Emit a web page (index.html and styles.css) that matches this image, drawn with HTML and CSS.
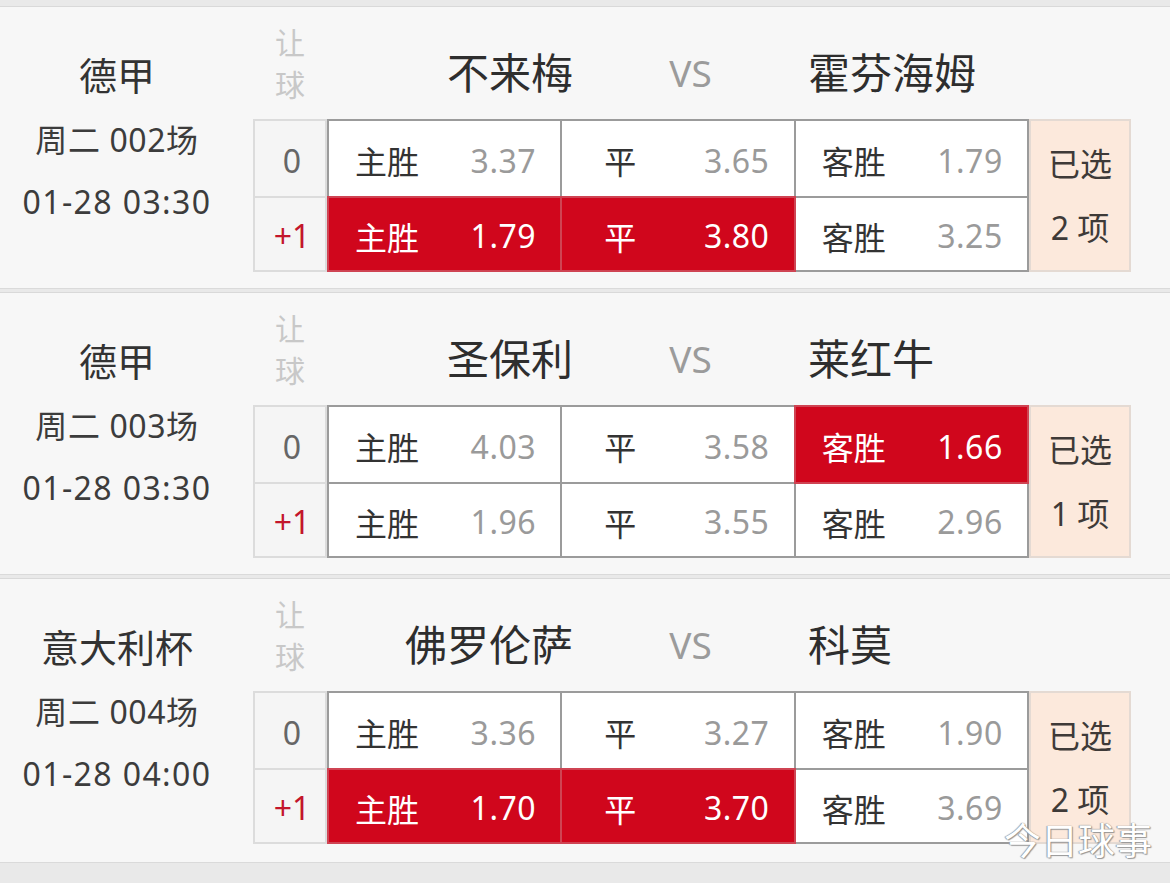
FILE: index.html
```html
<!DOCTYPE html>
<html lang="zh-CN">
<head>
<meta charset="utf-8">
<title>竞彩足球</title>
<link rel="stylesheet" href="styles.css">
</head>
<body>
<div class="list">

  <section class="card">
    <div class="info">
      <div class="league">德甲</div>
      <div class="no">周二 002场</div>
      <div class="time">01-28 03:30</div>
    </div>
    <div class="main">
      <div class="head">
        <div class="rq">让<br>球</div>
        <div class="home">不来梅</div>
        <div class="vs">VS</div>
        <div class="away">霍芬海姆</div>
      </div>
      <div class="table">
        <div class="hcap">
          <div class="hc">0</div>
          <div class="hc plus">+1</div>
        </div>
        <div class="odds">
          <div class="cell"><span class="lbl">主胜</span><span class="val">3.37</span></div>
          <div class="cell"><span class="lbl">平</span><span class="val">3.65</span></div>
          <div class="cell"><span class="lbl">客胜</span><span class="val">1.79</span></div>
          <div class="cell on"><span class="lbl">主胜</span><span class="val">1.79</span></div>
          <div class="cell on"><span class="lbl">平</span><span class="val">3.80</span></div>
          <div class="cell"><span class="lbl">客胜</span><span class="val">3.25</span></div>
        </div>
        <div class="picked"><span>已选</span><span>2 项</span></div>
      </div>
    </div>
  </section>

  <section class="card">
    <div class="info">
      <div class="league">德甲</div>
      <div class="no">周二 003场</div>
      <div class="time">01-28 03:30</div>
    </div>
    <div class="main">
      <div class="head">
        <div class="rq">让<br>球</div>
        <div class="home">圣保利</div>
        <div class="vs">VS</div>
        <div class="away">莱红牛</div>
      </div>
      <div class="table">
        <div class="hcap">
          <div class="hc">0</div>
          <div class="hc plus">+1</div>
        </div>
        <div class="odds">
          <div class="cell"><span class="lbl">主胜</span><span class="val">4.03</span></div>
          <div class="cell"><span class="lbl">平</span><span class="val">3.58</span></div>
          <div class="cell on"><span class="lbl">客胜</span><span class="val">1.66</span></div>
          <div class="cell"><span class="lbl">主胜</span><span class="val">1.96</span></div>
          <div class="cell"><span class="lbl">平</span><span class="val">3.55</span></div>
          <div class="cell"><span class="lbl">客胜</span><span class="val">2.96</span></div>
        </div>
        <div class="picked"><span>已选</span><span>1 项</span></div>
      </div>
    </div>
  </section>

  <section class="card">
    <div class="info">
      <div class="league">意大利杯</div>
      <div class="no">周二 004场</div>
      <div class="time">01-28 04:00</div>
    </div>
    <div class="main">
      <div class="head">
        <div class="rq">让<br>球</div>
        <div class="home">佛罗伦萨</div>
        <div class="vs">VS</div>
        <div class="away">科莫</div>
      </div>
      <div class="table">
        <div class="hcap">
          <div class="hc">0</div>
          <div class="hc plus">+1</div>
        </div>
        <div class="odds">
          <div class="cell"><span class="lbl">主胜</span><span class="val">3.36</span></div>
          <div class="cell"><span class="lbl">平</span><span class="val">3.27</span></div>
          <div class="cell"><span class="lbl">客胜</span><span class="val">1.90</span></div>
          <div class="cell on"><span class="lbl">主胜</span><span class="val">1.70</span></div>
          <div class="cell on"><span class="lbl">平</span><span class="val">3.70</span></div>
          <div class="cell"><span class="lbl">客胜</span><span class="val">3.69</span></div>
        </div>
        <div class="picked"><span>已选</span><span>2 项</span></div>
      </div>
    </div>
  </section>

</div>
<div class="watermark">今日球事</div>
</body>
</html>
```

FILE: styles.css
```css
html, body {
  margin: 0;
  padding: 0;
}
body {
  width: 1170px;
  height: 883px;
  overflow: hidden;
  background: #e9e9e9;
  font-family: "Noto Sans", "Noto Sans CJK SC", sans-serif;
  color: #333;
  position: relative;
}
.list {
  padding-top: 7px;
}
.card {
  height: 281px;
  background: #f7f7f7;
  box-shadow: 0 -1px 0 #d9d9d9, 0 1px 0 #dadada;
  margin-bottom: 5px;
  display: flex;
  box-sizing: border-box;
}
.card:last-child {
  height: 283px;
}
.info {
  width: 234px;
  flex: none;
  text-align: center;
  padding-top: 38px;
  color: #3c3c3c;
}
.league {
  font-size: 38px;
  line-height: 60px;
  color: #333;
}
.no {
  font-size: 32px;
  line-height: 62px;
  margin-top: 4px;
  letter-spacing: 0.6px;
}
.time {
  font-size: 32px;
  line-height: 62px;
  letter-spacing: 1.4px;
}
.main {
  margin-left: 19px;
  display: flex;
  flex-direction: column;
}
.head {
  height: 112px;
  display: grid;
  grid-template-columns: 74px 246px 235px 1fr;
  align-items: start;
}
.rq {
  padding-top: 15px;
  font-size: 30px;
  line-height: 42px;
  color: #c8c8c8;
  text-align: center;
}
.home, .away, .vs {
  padding-top: 36px;
  line-height: 60px;
  font-size: 42px;
  color: #2e2e2e;
}
.home {
  text-align: right;
}
.vs {
  text-align: center;
  font-size: 37px;
  color: #9b9b9b;
}
.away {
  text-align: left;
}
.table {
  display: flex;
  height: 153px;
}
.hcap {
  width: 74px;
  box-sizing: border-box;
  border: 2px solid #dcdcdc;
  background: #f5f5f5;
  display: grid;
  grid-template-rows: 75px 1fr;
}
.hc {
  display: flex;
  align-items: center;
  justify-content: center;
  padding: 3px 0 0 4px;
  font-size: 32px;
  color: #666;
}
.hc + .hc {
  border-top: 2px solid #dcdcdc;
}
.hc.plus {
  color: #c3162b;
}
.odds {
  width: 702px;
  box-sizing: border-box;
  display: grid;
  grid-template-columns: 1fr 1fr 1fr;
  grid-template-rows: 75px 1fr;
  gap: 2px;
  padding: 2px;
  background: #9b9b9b;
}
.cell {
  background: #fff;
  display: flex;
  align-items: center;
  padding-top: 3px;
}
.lbl {
  width: 64px;
  margin-left: 26px;
  text-align: center;
  font-size: 32px;
  color: #333;
}
.val {
  width: 100px;
  margin-left: auto;
  margin-right: 7px;
  text-align: center;
  font-size: 32px;
  letter-spacing: 0.5px;
  color: #9a9a9a;
}
.cell.on {
  background: #d0061c;
  box-shadow: 0 0 0 2px #cf4453;
}
.cell.on .lbl,
.cell.on .val {
  color: #fff;
}
.picked {
  width: 102px;
  box-sizing: border-box;
  border: 2px solid #e4dad3;
  background: #fce9dc;
  display: flex;
  flex-direction: column;
  align-items: center;
  justify-content: center;
  gap: 24px;
  font-size: 32px;
  line-height: 40px;
  color: #3e3a38;
}
.watermark {
  position: absolute;
  left: 1004px;
  top: 820px;
  font-family: "Noto Sans CJK SC", sans-serif;
  font-size: 37px;
  line-height: 38px;
  color: #fff;
  text-shadow: 0 0 1px #777, 1px 1px 1px #999, -1px 0 1px #aaa;
}
```
